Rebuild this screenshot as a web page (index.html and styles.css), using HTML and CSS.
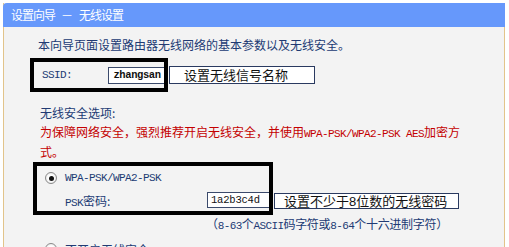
FILE: index.html
```html
<!DOCTYPE html>
<html lang="zh-CN">
<head>
  <meta charset="UTF-8" />
  <title>设置向导 - 无线设置</title>
  <link rel="stylesheet" href="styles.css">
</head>
<body>
  <div class="panel">
    <div class="panel-title">设置向导<span class="dash">－</span>无线设置</div>

    <div class="panel-body">
      <p class="intro">本向导页面设置路由器无线网络的基本参数以及无线安全。</p>

      <div class="ssid-row">
        <div class="mark ssid-mark">
          <span class="mono label">SSID:</span>
          <span class="field ssid-field">zhangsan</span>
        </div>
        <span class="note ssid-note">设置无线信号名称</span>
      </div>

      <p class="section">无线安全选项:</p>
      <p class="warn">为保障网络安全，强烈推荐开启无线安全，并使用<span class="mono">WPA-PSK/WPA2-PSK AES</span>加密方式。</p>

      <div class="wpa-row">
        <div class="mark wpa-mark">
          <div class="option">
            <span class="radio checked"></span>
            <span class="mono">WPA-PSK/WPA2-PSK</span>
          </div>
          <div class="psk">
            <span class="psk-label"><span class="mono">PSK</span>密码:</span>
            <span class="field psk-field">1a2b3c4d</span>
          </div>
        </div>
        <span class="note psk-note">设置不少于<span class="digit">8</span>位数的无线密码</span>
      </div>

      <p class="hint">（<span class="mono">8-63</span>个<span class="mono">ASCII</span>码字符或<span class="mono">8-64</span>个十六进制字符）</p>

      <div class="option off">
        <span class="radio"></span>
        <span>不开启无线安全</span>
      </div>
    </div>
  </div>
</body>
</html>
```

FILE: styles.css
```css
* {
  box-sizing: border-box;
  margin: 0;
  padding: 0;
}
body {
  background: #ffffff;
  font-family: "Noto Sans CJK SC", "Noto Sans", sans-serif;
  font-size: 12px;
  color: #213a73;
  overflow: hidden;
}
.mono {
  font-family: "Liberation Mono", "DejaVu Sans Mono", monospace;
  font-size: 11px;
  letter-spacing: -0.6px;
}
.panel {
  margin: 3px 0 0 3px;
  width: 502px;
  height: 260px;
  background: #f3f3f3;
  border-left: 1px solid #e2c48a;
  border-right: 1px solid #e2c48a;
}
.panel-title {
  height: 24px;
  margin: 0 -1px;
  padding-left: 8px;
  background: #6698fb;
  border-top-left-radius: 4px;
  color: #ffffff;
  font-size: 12px;
  letter-spacing: -1px;
  line-height: 24px;
}
.panel-title .dash {
  margin: 0 7px 0 6px;
}
.panel-body {
  padding: 9px 0 0 34px;
}
.intro {
  line-height: 18px;
}
.ssid-row {
  display: flex;
  align-items: center;
  margin: 4px 0 0 -8px;
}
.mark {
  border: 4px solid #000000;
  background: #f3f3f3;
}
.ssid-mark {
  display: flex;
  align-items: center;
  width: 138px;
  height: 34px;
  padding-left: 8px;
}
.ssid-mark .label {
  width: 67px;
}
.field {
  display: inline-block;
  height: 17px;
  border: 1px solid #3b4a6b;
  background: #ffffff;
  color: #111111;
  font-family: "Liberation Mono", "DejaVu Sans Mono", monospace;
  font-size: 10.5px;
  line-height: 15px;
}
.ssid-field {
  width: 56px;
  padding-left: 4px;
  font-weight: 600;
  letter-spacing: -0.4px;
  border-right: none;
}
.note {
  height: 18px;
  border: 1px solid #2a3a60;
  background: #ffffff;
  color: #111111;
  font-size: 13px;
  line-height: 16px;
}
.ssid-note {
  width: 146px;
  margin-left: 1px;
  padding-left: 14px;
}
.section {
  margin: 12px 0 0 2px;
  line-height: 18px;
}
.warn {
  width: 430px;
  margin: 1px 0 0 2px;
  color: #c40000;
  line-height: 18px;
}
.wpa-row {
  display: flex;
  align-items: flex-end;
  margin: 1px 0 0 -5px;
}
.wpa-mark {
  width: 240px;
  height: 53px;
  padding: 1px 0 0 8px;
}
.option {
  display: flex;
  align-items: center;
  gap: 8px;
  height: 22px;
}
.radio {
  display: inline-block;
  width: 12px;
  height: 12px;
  border: 1px solid #8a8a8a;
  border-radius: 50%;
  background: radial-gradient(circle, #ffffff 40%, #dcdcdc 100%);
  position: relative;
}
.radio.checked::after {
  content: "";
  position: absolute;
  left: 2.5px;
  top: 2.5px;
  width: 5px;
  height: 5px;
  border-radius: 50%;
  background: #111111;
}
.psk {
  display: flex;
  align-items: center;
  padding-left: 20px;
  height: 22px;
}
.psk-label {
  width: 142px;
}
.psk-field {
  width: 62px;
  height: 16px;
  padding-left: 3px;
  border-right: none;
  letter-spacing: -0.2px;
}
.psk-note {
  width: 185px;
  margin: 0 0 6px 1px;
  height: 16px;
  line-height: 14px;
  padding-left: 9px;
}
.digit {
  font-family: "Liberation Sans", sans-serif;
}
.hint {
  margin: 1px 0 0 168px;
  line-height: 16px;
  letter-spacing: -0.3px;
}
.off {
  margin: 4px 0 0 7px;
  height: 22px;
}
```
